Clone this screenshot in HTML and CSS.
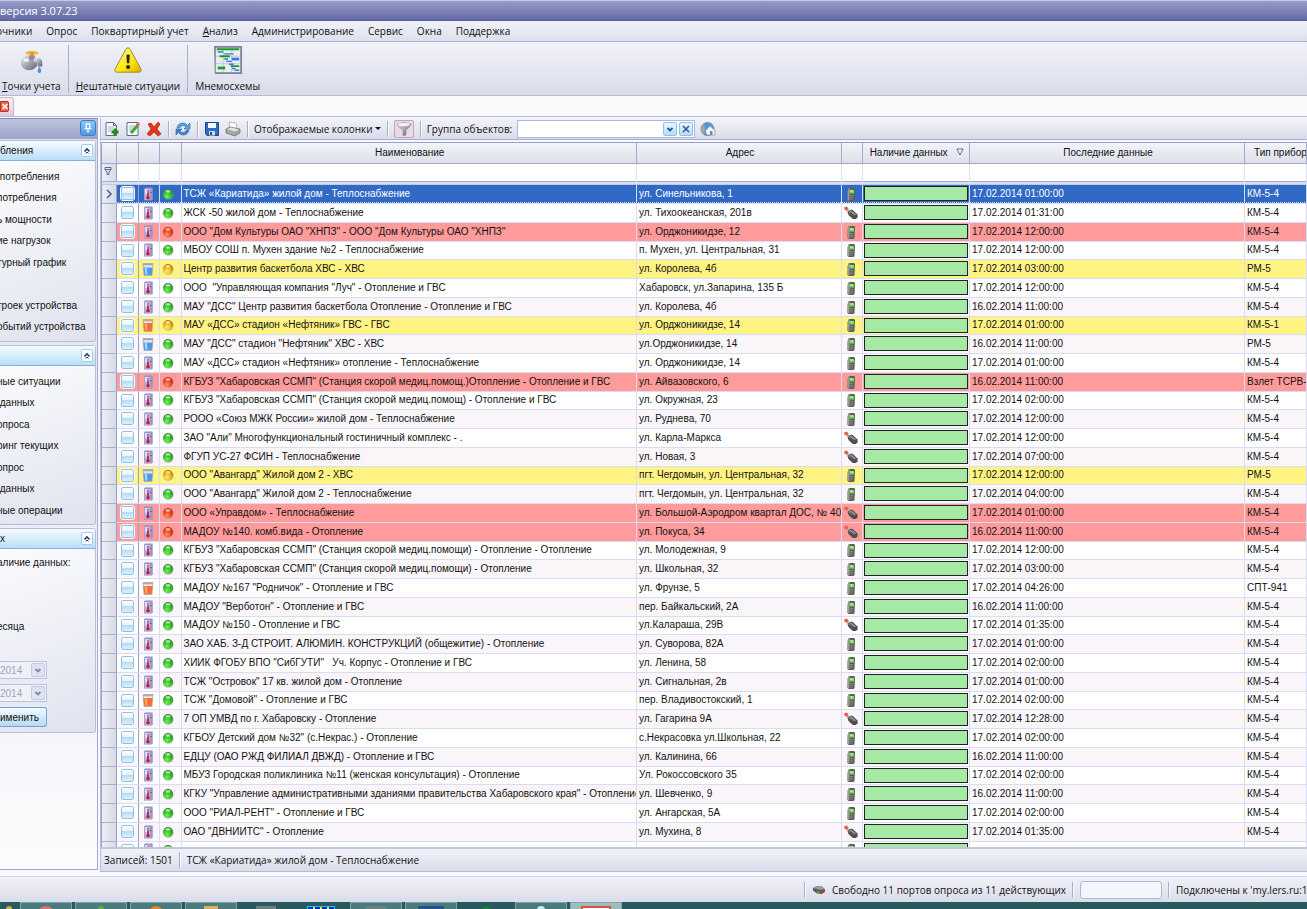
FILE: index.html
```html
<!DOCTYPE html>
<html lang="ru">
<head>
<meta charset="utf-8">
<title>версия 3.07.23</title>
<link rel="stylesheet" href="styles.css">
</head>
<body>
<svg class="symbols" aria-hidden="true">
  <defs>
    <radialGradient id="g-green" cx="0.4" cy="0.75" r="0.7"><stop offset="0" stop-color="#7dee5a"/><stop offset="0.5" stop-color="#35c92b"/><stop offset="1" stop-color="#2b8a22"/></radialGradient>
    <radialGradient id="g-red" cx="0.4" cy="0.75" r="0.7"><stop offset="0" stop-color="#ff9a5a"/><stop offset="0.5" stop-color="#f44a23"/><stop offset="1" stop-color="#b82a12"/></radialGradient>
    <radialGradient id="g-yellow" cx="0.4" cy="0.75" r="0.7"><stop offset="0" stop-color="#fff06a"/><stop offset="0.5" stop-color="#f4bd1b"/><stop offset="1" stop-color="#b97c0a"/></radialGradient>
    <linearGradient id="g-warn" x1="0" y1="0" x2="1" y2="1"><stop offset="0" stop-color="#fffbb0"/><stop offset="0.6" stop-color="#fde800"/><stop offset="1" stop-color="#d9a800"/></linearGradient>
    <linearGradient id="g-metal" x1="0" y1="0" x2="1" y2="1"><stop offset="0" stop-color="#f2f2f8"/><stop offset="0.5" stop-color="#a5a5b4"/><stop offset="1" stop-color="#5d5d70"/></linearGradient>
  </defs>
  <symbol id="green" viewBox="0 0 12 12"><circle cx="6.4" cy="6.6" r="5.2" fill="#999" opacity="0.6"/><circle cx="6" cy="6" r="5" fill="url(#g-green)"/><ellipse cx="6" cy="3.4" rx="2.600" ry="1.300" fill="#fff" opacity="0.6"/></symbol>
  <symbol id="red" viewBox="0 0 12 12"><circle cx="6.4" cy="6.6" r="5.2" fill="#999" opacity="0.6"/><circle cx="6" cy="6" r="5" fill="url(#g-red)"/><ellipse cx="6" cy="3.4" rx="2.600" ry="1.300" fill="#fff" opacity="0.6"/></symbol>
  <symbol id="yellow" viewBox="0 0 12 12"><circle cx="6.4" cy="6.6" r="5.2" fill="#999" opacity="0.6"/><circle cx="6" cy="6" r="5" fill="url(#g-yellow)"/><ellipse cx="6" cy="3.4" rx="2.600" ry="1.300" fill="#fff" opacity="0.6"/></symbol>
  <symbol id="thermo" viewBox="0 0 14 14"><path d="M3 1.500l1-1h7.500v12l-1 1H3z" fill="#8f8bc4"/><path d="M3.500 2l6-.5v11.500h-6z" fill="#b9b5e2"/><path d="M4 2h2.500v5H4z" fill="#dcdaf4"/><path d="M9.500 1.500h2v11.500h-2z" fill="#9a96cc"/><path d="M7 3v7" stroke="#c8505c" stroke-width="1.300"/><path d="M7 6v5" stroke="#c81e28" stroke-width="1.500"/><circle cx="7" cy="10.800" r="1.800" fill="#cc1c28"/><path d="M9 5.500h1.500" stroke="#5c5a94"/></symbol>
  <symbol id="cold" viewBox="0 0 14 14"><path d="M2 1.500h10l-1 12h-8z" fill="#e4e9f0" stroke="#9aa5b5" stroke-width="0.800"/><path d="M2.600 5.500h8.800L10.800 13H3.200z" fill="#4f9ae6"/><path d="M3.600 6h2.400l.4 6.500h-2z" fill="#a8d4fa"/><path d="M2 1.500h10l-.2 1.800H2.200z" fill="#a2a8b2"/></symbol>
  <symbol id="hot" viewBox="0 0 14 14"><path d="M2 1.500h10l-1 12h-8z" fill="#f0e9e4" stroke="#b0a09a" stroke-width="0.800"/><path d="M2.600 5h8.800L10.800 13H3.200z" fill="#f5702e"/><path d="M3.600 5.500h2.400l.4 6.500h-2z" fill="#fba578"/><path d="M2 1.500h10l-.2 1.800H2.200z" fill="#b8a8a2"/></symbol>
  <symbol id="phone" viewBox="0 0 14 14"><path d="M4.500 1.500L6 1h4l1 1-.5 11-1 1h-5l-1-1 .2-9z" fill="#5c5c58"/><path d="M3.700 4l.8-2.500H6L5.200 13.500h-1l-.7-.7z" fill="#9c9c96"/><path d="M6 3h4v3.600H5.800z" fill="#66e04c"/><path d="M6.500 3.300h2v1.500h-2z" fill="#c5f8b0"/><path d="M5.600 8.500h3.800M5.500 10.200h3.800M5.500 12h3.600" stroke="#8e8e8a" stroke-width="0.800"/></symbol>
  <symbol id="modem" viewBox="0 0 14 14"><path d="M0 1.500L2.500.5 4.500 2 4 4 2.500 5 .5 3.500z" fill="#e8604c"/><path d="M2.500 4.500L5 3.300l1 1-2.500 2z" fill="#b8b8b8"/><path d="M3.500 6l3-2.300h2l4.800 4.500.5 3-2 1.800h-3L4.500 9z" fill="#4e4e4e"/><path d="M4.500 6.300L7 4.300l5.200 4-2.600 1.500z" fill="#8e8e8e"/><path d="M6 6.500l4 3" stroke="#3c3c3c" stroke-width="0.800"/></symbol>
  <symbol id="port" viewBox="0 0 14 10"><path d="M1 3l4-2 5 .5 3 3v2l-3 2.500-5-.5-4-3z" fill="#5c5c5c"/><path d="M1 3l4-2 5 .5 2.500 2.500-4 1z" fill="#9a9a9a"/><path d="M5 6.500h2.500v1H5z" fill="#58d048"/><path d="M9 5.500l3.500 0v2L9.500 8z" fill="#c03a28"/></symbol>
  <symbol id="up" viewBox="0 0 10 10"><path d="M2.500 5.500L5 3l2.500 2.500" fill="none" stroke="#1c3f80" stroke-width="1.600"/><path d="M3.500 7.500L5 6l1.500 1.500" fill="none" stroke="#1c3f80"/></symbol>
  <symbol id="down" viewBox="0 0 10 10"><path d="M2.500 4L5 6.500 7.500 4" fill="none" stroke="currentColor" stroke-width="1.800"/></symbol>
</svg>

<header class="title-bar">версия 3.07.23</header>

<nav class="menu">
  <a href="#">очники</a>
  <a href="#">Опрос</a>
  <a href="#">Поквартирный учет</a>
  <a href="#"><u>А</u>нализ</a>
  <a href="#">Администрирование</a>
  <a href="#">Сервис</a>
  <a href="#">Окна</a>
  <a href="#">Поддержка</a>
</nav>

<div class="toolbar">
  <button class="tool">
    <svg viewBox="0 0 32 32"><ellipse cx="14" cy="19" rx="9" ry="8" fill="url(#g-metal)"/><path d="M14 11h6v5h-6z" fill="#8d8da0"/><path d="M19 14l6 0q3 1 3 5v4h-5v-4l-4-1z" fill="url(#g-metal)"/><path d="M10 8q6-3 14 0l-1 2q-6-1-12 0z" fill="#f2b52e"/><path d="M15 8h4v4h-4z" fill="#d9981c"/><ellipse cx="11" cy="16" rx="3" ry="2" fill="#fff" opacity="0.8"/><path d="M25 23q4 6 0 7-4-1 0-7" fill="#4a94e0"/></svg>
    <span><u>Т</u>очки учета</span>
  </button>
  <button class="tool">
    <svg viewBox="0 0 32 32"><path d="M16 3q1.500 0 2.500 2l11 20q1.500 4-2 4h-23q-3.500 0-2-4l11-20q1-2 2.500-2z" fill="url(#g-warn)" stroke="#9a8430"/><path d="M14.300 10.500h3.600l-.6 9h-2.400z" fill="#222"/><circle cx="16.100" cy="23.500" r="2.200" fill="#222"/></svg>
    <span><u>Н</u>ештатные ситуации</span>
  </button>
  <button class="tool">
    <svg viewBox="0 0 32 32"><path d="M1 1h30v30H2z" fill="#7d859c"/><path d="M3 3h26v26H3z" fill="#e9eef4"/><path d="M3 12h26M3 20h26M11 3v26M20 3v26" stroke="#c0c8d4"/><path d="M4 4.500h24M7 12h11M19 22.500h9" stroke="#1a9a22" stroke-width="2"/><path d="M5 24.500h8" stroke="#1a9a22" stroke-width="3"/><path d="M5 7.500h6M12 9.500h10M12 15h4M14 17.500h6M17 20.500h5M20 25h4M23 27h5" stroke="#2f7fe0" stroke-width="1.500"/><path d="M20 15h8" stroke="#2f7fe0" stroke-width="3"/></svg>
    <span>Мнемосхемы</span>
  </button>
</div>

<div class="tabs">
  <div class="tab"><button class="tab-close" aria-label="Закрыть"><svg viewBox="0 0 10 10"><path d="M2 2l6 6M8 2l-6 6" stroke="#fff" stroke-width="2"/></svg></button></div>
</div>

<main class="content">
  <aside class="sidebar">
    <div class="sidebar-head">
      <button class="pin" aria-label="Закрепить"><svg viewBox="0 0 12 12"><path d="M4 2.500h4M4.500 3v3.500M7.500 3v3.500M3 6.500h6M6 7v3" stroke="#fff" fill="none" stroke-width="1.200"/></svg></button>
    </div>

    <section class="group">
      <h2>бления <button aria-label="Свернуть"><svg><use href="#up"/></svg></button></h2>
      <ul>
        <li><a href="#">&nbsp;потребления</a></li>
        <li><a href="#">потребления</a></li>
        <li><a href="#">ь мощности</a></li>
        <li><a href="#">ие нагрузок</a></li>
        <li><a href="#">турный график</a></li>
        <li></li>
        <li><a href="#">троек устройства</a></li>
        <li><a href="#">обытий устройства</a></li>
      </ul>
    </section>

    <section class="group">
      <h2>&nbsp;<button aria-label="Свернуть"><svg><use href="#up"/></svg></button></h2>
      <ul>
        <li><a href="#">ные ситуации</a></li>
        <li><a href="#">&nbsp;данных</a></li>
        <li><a href="#">опроса</a></li>
        <li><a href="#">ринг текущих</a></li>
        <li><a href="#">опрос</a></li>
        <li><a href="#">&nbsp;данных</a></li>
        <li><a href="#">ные операции</a></li>
      </ul>
    </section>

    <section class="group">
      <h2>х <button aria-label="Свернуть"><svg><use href="#up"/></svg></button></h2>
      <form class="period">
        <p>аличие данных:</p>
        <p class="month">есяца</p>
        <div class="date"><input type="text" value="2014" aria-label="Начало периода" disabled><button type="button" aria-label="Выбрать дату" disabled><svg><use href="#down"/></svg></button></div>
        <div class="date"><input type="text" value="2014" aria-label="Конец периода" disabled><button type="button" aria-label="Выбрать дату" disabled><svg><use href="#down"/></svg></button></div>
        <button type="button" class="apply">именить</button>
      </form>
    </section>
  </aside>

  <div class="panel">
    <div class="grid-tools">
      <button aria-label="Добавить"><svg viewBox="0 0 16 16"><path d="M2 1.500h7.500l3 3v10H2z" fill="#f7f9fc" stroke="#5d6f86"/><path d="M9.500 1.500v3h3" fill="none" stroke="#5d6f86"/><path d="M4 6h6M4 8h5M4 10h3" stroke="#a9b7c8"/><path d="M11 7.500v7M7.500 11h7" stroke="#238a1c" stroke-width="3"/></svg></button>
      <button aria-label="Изменить"><svg viewBox="0 0 16 16"><path d="M2 1.500h11v13H2z" fill="#f7f9fc" stroke="#5d6f86"/><path d="M4 5h6M4 7h5M4 9h3" stroke="#a9b7c8"/><path d="M6 12l7-8" stroke="#39a935" stroke-width="3"/><path d="M12 4.500l2-2.500" stroke="#e06a5a" stroke-width="3"/></svg></button>
      <button aria-label="Удалить"><svg viewBox="0 0 16 16"><path d="M2 3l3-1 3 4 4-5 2 2-3 5 4 5-3 2-4-4-4 4-3-2 4-5z" fill="#e8361c" stroke="#b31f0c" stroke-width="0.700"/></svg></button>
      <i class="sep"></i>
      <button aria-label="Обновить"><svg viewBox="0 0 16 16"><path d="M2 7q1-5 6-5 3 0 4.500 2.500L15 2v6H9l2-2q-1-1.500-3-1.500-2.500 0-3.500 2.500z" fill="#5aa2e4" stroke="#2c66ac" stroke-width="0.600"/><path d="M14 9q-1 5-6 5-3 0-4.500-2.500L1 14V8h6l-2 2q1 1.500 3 1.500 2.500 0 3.500-2.500z" fill="#3c84d0" stroke="#2c66ac" stroke-width="0.600"/></svg></button>
      <i class="sep"></i>
      <button aria-label="Сохранить"><svg viewBox="0 0 16 16"><path d="M1.500 1.500h13v13H3l-1.500-2z" fill="#2f6cc4" stroke="#1d4688"/><path d="M4 2h8v5H4z" fill="#f4f8fd"/><path d="M5 10h6v4.500H5z" fill="#c9d6e8"/><path d="M6 11h2v3H6z" fill="#29508e"/></svg></button>
      <button aria-label="Печать"><svg viewBox="0 0 16 16"><path d="M4 1l7 1 1 6H5z" fill="#fff" stroke="#9a9a9a" stroke-width="0.700"/><path d="M1 8l4-2 10 2v4l-5 3-9-3z" fill="#a8a8a8" stroke="#6c6c6c" stroke-width="0.700"/><path d="M2 8l4-1.500 8 2-4 2z" fill="#e3e3e3"/><path d="M10 13l3-1.500" stroke="#58b848"/></svg></button>
      <i class="sep"></i>
      <button class="columns">Отображаемые колонки <span class="arrow"></span></button>
      <i class="sep"></i>
      <button class="filter" aria-label="Фильтр"><svg viewBox="0 0 16 16"><path d="M1 3q7-3 14 0 0 2-5 6v5l-3 1V9Q1 5 1 3z" fill="url(#g-metal)" stroke="#8a8a8a" stroke-width="0.600"/><ellipse cx="8" cy="3.500" rx="6" ry="1.600" fill="#f4f4f4"/></svg></button>
      <i class="sep"></i>
      <label for="objects">Группа объектов:</label>
      <div class="combo">
        <input id="objects" type="text">
        <button aria-label="Открыть список"><svg><use href="#down"/></svg></button>
        <button aria-label="Очистить"><svg viewBox="0 0 10 10"><path d="M2 2l6 6M8 2l-6 6" stroke="#25559c" stroke-width="1.500"/></svg></button>
      </div>
      <button class="home" aria-label="Объекты"><svg viewBox="0 0 16 16"><circle cx="7.500" cy="8" r="6.500" fill="#4c9be0" stroke="#7b8794"/><path d="M1 8a6.500 6.500 0 0 1 3-5l1 5-1 5q-3-1-3-5z" fill="#9aa6b2"/><path d="M5.500 9.500L10 5l5 4.500V14H6.500z" fill="#f6f6f6" stroke="#8b8b8b" stroke-width="0.700"/><path d="M10 10h2.500v4H10z" fill="#4f92d8"/></svg></button>
    </div>

    <div class="grid-wrap">
      <table class="grid">
        <colgroup>
          <col class="c-mark"><col class="c-check"><col class="c-icon"><col class="c-state"><col class="c-name"><col class="c-addr"><col class="c-link"><col class="c-avail"><col class="c-last"><col class="c-type">
        </colgroup>
        <thead>
          <tr class="heads">
            <th></th><th></th><th></th><th></th>
            <th>Наименование</th><th>Адрес</th><th></th>
            <th>Наличие данных <svg class="sort" viewBox="0 0 8 8"><path d="M1 1h6L4 7z" fill="#fff" stroke="#5a66a8"/></svg></th>
            <th>Последние данные</th><th class="cut">Тип прибора</th>
          </tr>
          <tr class="filters">
            <td class="mark"><svg class="sort" viewBox="0 0 8 8"><path d="M1 .5h6v2L5 5v2.500H3V5L1 2.500zM1 2.500h6" fill="none" stroke="#5a66a8"/></svg></td>
            <td></td><td></td><td></td><td></td><td></td><td></td><td></td><td></td><td></td>
          </tr>
          <tr class="divider"><td colspan="10"></td></tr>
        </thead>
        <tbody id="rows"></tbody>
      </table>
    </div>

    <div class="grid-status">
      <span>Записей: 1501</span>
      <i class="sep"></i>
      <span>ТСЖ «Кариатида» жилой дом - Теплоснабжение</span>
    </div>
  </div>
</main>

<footer class="status">
  <i class="sep"></i>
  <svg class="port"><use href="#port"/></svg>
  <span>Свободно 11 портов опроса из 11 действующих</span>
  <i class="sep"></i>
  <div class="progress"></div>
  <i class="sep"></i>
  <span class="server">Подключены к 'my.lers.ru:1</span>
</footer>

<div class="taskbar">
  <i class="task bare yellow"></i>
  <i class="task red"></i>
  <i class="task green"></i>
  <i class="task orange"></i>
  <i class="task sand"></i>
  <i class="task bare gray"></i>
  <i class="task bare blue"></i>
  <i class="task gray"></i>
  <i class="task navy"></i>
  <i class="task bare leaf"></i>
  <i class="task cyan"></i>
  <i class="task active frame"></i>
</div>

<script src="script.js"></script>
</body>
</html>
```
FILE: styles.css
```css
* {
  box-sizing: border-box;
}

body {
  margin: 0;
  height: 100vh;
  display: flex;
  flex-direction: column;
  overflow: hidden;
  background: #f8f8fc;
  color: #111;
  font-family: "Open Sans", "Noto Sans", sans-serif;
  font-size: 10px;
}

button {
  font: inherit;
  color: inherit;
  border: none;
  background: none;
  padding: 0;
}

a {
  color: inherit;
  text-decoration: none;
}

.symbols {
  position: absolute;
  width: 0;
  height: 0;
}

.sep {
  flex: none;
  width: 2px;
  height: 16px;
  border-left: 1px solid #a3abd0;
  border-right: 1px solid #fff;
}

.title-bar {
  flex: none;
  height: 21px;
  line-height: 19px;
  color: #fff;
  font-size: 11px;
  border-top: 1px solid #c3c8de;
  border-bottom: 1px solid #55609a;
  background: linear-gradient(#969dc8, #6269a6);
}

.menu {
  flex: none;
  height: 21px;
  margin-left: -4px;
  display: flex;
  align-items: center;
  gap: 14px;
  background: linear-gradient(#f1f2f8, #dddfec);
  border-bottom: 1px solid #a9afcf;
}

.toolbar {
  flex: none;
  height: 54px;
  display: flex;
  padding: 3px 0 2px;
  background: linear-gradient(#f1f2f8, #dadcea);
  border-bottom: 1px solid #b5bad6;
}

.tool {
  display: flex;
  flex-direction: column;
  align-items: center;
  justify-content: space-between;
  padding: 0 7px;
  border-right: 1px solid #a9afd0;
}

.tool:first-child {
  padding-left: 2px;
}

.tool:last-child {
  border: none;
}

.tool svg {
  width: 30px;
  height: 30px;
}

.tool span {
  line-height: 14px;
}

.tabs {
  flex: none;
  height: 21px;
  display: flex;
  background: #f9f9fc;
  border-bottom: 1px solid #b5bad6;
}

.tab {
  width: 14px;
  margin-top: 1px;
  padding-top: 3px;
  border: 1px solid #c9b2cb;
  border-left: none;
  border-bottom: none;
  border-radius: 0 4px 0 0;
  background: linear-gradient(#fbf2f8, #e3c6dc);
}

.tab-close {
  display: block;
  width: 9px;
  height: 11px;
  border: 1px solid #b8321e;
  border-radius: 0 2px 2px 0;
  background: #e9694f;
}

.tab-close svg {
  display: block;
  width: 8px;
  height: 9px;
}

.content {
  flex: 1;
  min-height: 0;
  display: flex;
  padding: 1px 0 4px;
}

/* left panel */

.sidebar {
  flex: none;
  width: 98px;
  border-top: 1px solid #8089b8;
  border-right: 1px solid #a3aad0;
  border-bottom: 1px solid #a3aad0;
  background: linear-gradient(#dcdfec, #fbfbfd);
  font-family: "Liberation Sans", Arial, sans-serif;
  font-size: 10px;
  margin-bottom: 2px;
}

.sidebar-head {
  height: 20px;
  padding: 1px;
  display: flex;
  justify-content: flex-end;
  background: linear-gradient(#bfc4dc, #9ba3c8);
}

.pin {
  width: 16px;
  height: 16px;
  border: 1px solid #3c7fc0;
  border-radius: 3px;
  background: linear-gradient(#8cc4f4, #4f9ae0);
}

.pin svg {
  display: block;
  width: 14px;
  height: 14px;
}

.group {
  margin: 1px 1px 3px 0;
  border: 1px solid #b7bddb;
  border-left: none;
  border-radius: 0 3px 3px 0;
  background: linear-gradient(160deg, #fdfdfe, #e0e3ef);
}

.group h2 {
  height: 20px;
  margin: 0;
  padding-right: 2px;
  display: flex;
  align-items: center;
  justify-content: space-between;
  font-size: 10px;
  font-weight: normal;
  background: linear-gradient(#f6fcff, #b9def7);
  border-bottom: 1px solid #7fb2dd;
}

.group h2 button {
  width: 12px;
  height: 13px;
  border: 1px solid #a3cdea;
  border-radius: 2px;
  background: #fff;
}

.group h2 svg {
  display: block;
  width: 10px;
  height: 10px;
}

.group ul {
  list-style: none;
  margin: 0 0 0 -3px;
  padding: 5px 0 3px;
}

.group li {
  height: 21px;
  line-height: 21px;
  white-space: nowrap;
}

.group li:nth-child(even) {
  height: 22px;
}

.period {
  padding: 6px 0 5px;
}

.period p {
  margin: 0 0 48px -3px;
  line-height: 16px;
}

.period .month {
  margin-bottom: 26px;
}

.date {
  width: 47px;
  height: 18px;
  margin-bottom: 5px;
  display: flex;
  align-items: center;
  border: 1px solid #bcc2dd;
  border-left: none;
  background: #f0f1f7;
}

.date input {
  width: 31px;
  padding: 0;
  border: none;
  background: none;
  color: #9aa2c4;
  font: inherit;
}

.date button {
  width: 14px;
  height: 14px;
  color: #7d87b5;
  border: 1px solid #c6cbe2;
  border-radius: 2px;
  background: #dfe2ef;
}

.date svg,
.combo svg {
  display: block;
  width: 10px;
  height: 10px;
  margin: auto;
}

.apply {
  display: block;
  width: 47px;
  height: 20px;
  text-align: left;
  border: 1px solid #6ba4d2;
  border-left: none;
  border-radius: 0 3px 3px 0;
  background: linear-gradient(#f4fbff, #b5daf5);
}

/* grid */

.panel {
  flex: 1;
  min-width: 0;
  display: flex;
  flex-direction: column;
  margin-left: 2px;
  border-left: 1px solid #b7bddb;
}

.grid-tools {
  flex: none;
  height: 22px;
  padding-left: 3px;
  display: flex;
  align-items: center;
  gap: 5px;
  background: linear-gradient(#f2f3f9, #dadcea);
  border-bottom: 1px solid #a9afd0;
}

.grid-tools .sep {
  margin-left: 1px;
}

.grid-tools > button > svg {
  display: block;
  width: 16px;
  height: 16px;
}

.columns {
  display: flex;
  align-items: center;
  gap: 2px;
}

.arrow {
  border: 3px solid transparent;
  border-top-color: #111;
  border-bottom: none;
}

.grid-tools .filter {
  width: 20px;
  height: 18px;
  padding-left: 1px;
  border: 1px solid #c3a3c0;
  border-radius: 2px;
  background: #ecd9e8;
}

.combo {
  width: 178px;
  height: 18px;
  display: flex;
  align-items: center;
  gap: 2px;
  padding-right: 1px;
  border: 1px solid #b0b7d8;
  background: #fff;
}

.combo input {
  flex: 1;
  min-width: 0;
  height: 14px;
  padding: 0 2px;
  border: none;
  font: inherit;
}

.combo button {
  width: 14px;
  height: 14px;
  color: #25559c;
  border: 1px solid #8fc2e8;
  border-radius: 2px;
  background: linear-gradient(#eaf6fe, #b9dcf6);
}

.grid-wrap {
  flex: 1;
  min-height: 0;
  margin-top: 2px;
  overflow: hidden;
  border-top: 1px solid #98a0c8;
  border-left: 1px solid #98a0c8;
  background: #fff;
}

.grid {
  width: 100%;
  table-layout: fixed;
  border-collapse: collapse;
  font-family: "Liberation Sans", Arial, sans-serif;
  font-size: 10px;
  line-height: 14px;
}

.c-mark { width: 14px; }
.c-check { width: 22px; }
.c-icon { width: 21px; }
.c-state { width: 22px; }
.c-addr { width: 205px; }
.c-link { width: 21px; }
.c-avail { width: 107px; }
.c-last { width: 275px; }
.c-type { width: 62px; }

.grid th,
.grid td {
  padding: 0 0 0 2px;
  overflow: hidden;
  white-space: pre;
  font-weight: normal;
  text-align: left;
}

.heads {
  height: 20px;
}

.grid .heads th {
  text-align: center;
  border-right: 1px solid #a3aad0;
  border-bottom: 1px solid #a3aad0;
  background: linear-gradient(#f3f4f9, #dcdfeb);
}

.grid .heads .cut {
  text-align: left;
  padding-left: 9px;
}

.sort {
  width: 8px;
  height: 8px;
  margin-left: 6px;
}

.filters {
  height: 18px;
}

.grid .filters td {
  border-right: 1px solid #dfe1f6;
}

.grid .filters .mark .sort {
  margin: 0;
}

.divider {
  height: 3px;
}

.grid .divider td {
  height: 3px;
  border-top: 1px solid #a3aad0;
  border-bottom: 1px solid #b7bddb;
  background: #dcdfec;
  line-height: 1px;
}

#rows tr {
  height: 19px;
}

#rows tr:nth-child(4n) {
  height: 18px;
}

#rows td {
  border-right: 1px solid #dadcf6;
  border-bottom: 1px solid #dadcf6;
}

#rows tr:nth-child(odd) {
  background: #f9f5f9;
}

#rows tr.bad {
  background: #ff9b9b;
}

#rows tr.warn {
  background: #fff483;
}

#rows tr.selected {
  color: #fff;
  background: #316ac5;
  outline: 1px dotted #c9d8f2;
  outline-offset: -1px;
}

.grid td.mark,
#rows td.mark {
  border-right: 1px solid #98a0c8;
  border-bottom: 1px solid #a9afd0;
  background: linear-gradient(90deg, #eef0f6, #d6d9e6);
}

#rows .check {
  padding: 0 4px;
  border-right-color: #98a0c8;
}

#rows .pic {
  padding: 0 2px;
}

#rows svg {
  display: block;
  width: 14px;
  height: 14px;
}

#rows .state svg {
  width: 12px;
  height: 12px;
}

#rows .mark svg {
  width: 10px;
  height: 10px;
}

.check input {
  appearance: none;
  display: block;
  width: 13px;
  height: 13px;
  margin: 0;
  border: 1px solid #8fbfe4;
  border-radius: 2px;
  outline: 1px solid #fff;
  background: linear-gradient(#fff, #e4f3fd 45%, #b9dcf6 50%, #dff1fc);
}

#rows .avail {
  padding: 1px;
}

.bar {
  height: 15px;
  border: 1px solid #222;
  background: #a6e9a4;
}

.grid-status {
  flex: none;
  height: 25px;
  padding-left: 3px;
  display: flex;
  align-items: center;
  gap: 6px;
  border-top: 2px solid #c3c8e0;
  border-bottom: 1px solid #b5bad6;
  background: linear-gradient(#f1f2f8, #dadcea);
}

/* bottom */

.status {
  flex: none;
  height: 26px;
  display: flex;
  align-items: center;
  justify-content: flex-end;
  gap: 6px;
  border-top: 1px solid #d2d5e6;
  background: linear-gradient(#f1f2f8, #dadcea);
}

.port {
  width: 14px;
  height: 10px;
}

.progress {
  width: 82px;
  height: 18px;
  border: 1px solid #b0b7d8;
  border-radius: 3px;
  background: #f5f6fb;
}

.server {
  width: 131px;
  overflow: hidden;
  white-space: nowrap;
}

.taskbar {
  flex: none;
  height: 7px;
  display: flex;
  gap: 3px;
  overflow: hidden;
  background: #27595f;
}

.task {
  width: 52px;
  padding-top: 3px;
  border: 1px solid #7fa5a6;
  border-bottom: none;
  background: #4a7b7d;
}

.task::before {
  content: "";
  display: block;
  width: 26px;
  height: 8px;
  margin: 0 auto;
  border-radius: 8px 8px 0 0;
  background: #9a9a9a;
}

.task.bare {
  border-color: transparent;
  background: none;
}

.task.active {
  background: #9dbcbc;
}

.task.yellow { width: 17px; }
.task.yellow::before { width: 6px; background: #c9b13a; }
.task.red::before { width: 16px; background: #e07070; }
.task.green::before { width: 6px; background: #5fae3d; }
.task.orange::before { width: 14px; background: #e08a1f; }
.task.sand::before { width: 14px; border-radius: 0; background: #d9b45a; }
.task.gray::before { width: 20px; border-radius: 0; background: #6e7f80; }
.task.blue::before { border: 1px solid #16c8e8; border-radius: 0; background: repeating-linear-gradient(90deg, #0a2bd0 0 5px, #e8e040 5px 7px); }
.task.navy::before { border-radius: 0; background: #24508e; }
.task.leaf::before { width: 12px; background: #1e7a3e; }
.task.cyan::before { width: 8px; background: #bfeef2; }
.task.frame::before { border: 2px solid #e0503c; border-radius: 0; background: #fff; }
```
FILE: script.js
```js
// name, address, link, last data, device, icon, state
const data = [
  ['ТСЖ «Кариатида» жилой дом - Теплоснабжение', 'ул. Синельникова, 1', 'phone', '17.02.2014 01:00:00', 'КМ-5-4'],
  ['ЖСК -50 жилой дом - Теплоснабжение', 'ул. Тихоокеанская, 201в', 'modem', '17.02.2014 01:31:00', 'КМ-5-4'],
  ['ООО "Дом Культуры ОАО "ХНПЗ" - ООО "Дом Культуры ОАО "ХНПЗ"', 'ул. Орджоникидзе, 12', 'phone', '17.02.2014 12:00:00', 'КМ-5-4', 'thermo', 'red'],
  ['МБОУ СОШ п. Мухен здание №2 - Теплоснабжение', 'п. Мухен, ул. Центральная, 31', 'phone', '17.02.2014 12:00:00', 'КМ-5-4'],
  ['Центр развития баскетбола ХВС - ХВС', 'ул. Королева, 4б', 'phone', '17.02.2014 03:00:00', 'РМ-5', 'cold', 'yellow'],
  ['ООО  "Управляющая компания "Луч" - Отопление и ГВС', 'Хабаровск, ул.Запарина, 135 Б', 'phone', '17.02.2014 12:00:00', 'КМ-5-4'],
  ['МАУ "ДСС" Центр развития баскетбола Отопление - Отопление и ГВС', 'ул. Королева, 4б', 'phone', '16.02.2014 11:00:00', 'КМ-5-4'],
  ['МАУ «ДСС» стадион «Нефтяник» ГВС - ГВС', 'ул. Орджоникидзе, 14', 'phone', '17.02.2014 01:00:00', 'КМ-5-1', 'hot', 'yellow'],
  ['МАУ "ДСС" стадион "Нефтяник" ХВС - ХВС', 'ул.Орджоникидзе, 14', 'phone', '16.02.2014 11:00:00', 'РМ-5', 'cold'],
  ['МАУ «ДСС» стадион «Нефтяник» отопление - Теплоснабжение', 'ул. Орджоникидзе, 14', 'phone', '17.02.2014 01:00:00', 'КМ-5-4'],
  ['КГБУЗ "Хабаровская ССМП" (Станция скорой медиц.помощ.)Отопление - Отопление и ГВС', 'ул. Айвазовского, 6', 'phone', '16.02.2014 11:00:00', 'Взлет ТСРВ-0', 'thermo', 'red'],
  ['КГБУЗ "Хабаровская ССМП" (Станция скорой медиц.помощ) - Отопление и ГВС', 'ул. Окружная, 23', 'phone', '17.02.2014 02:00:00', 'КМ-5-4'],
  ['РООО «Союз МЖК России» жилой дом - Теплоснабжение', 'ул. Руднева, 70', 'phone', '17.02.2014 12:00:00', 'КМ-5-4'],
  ['ЗАО "Али" Многофункциональный гостиничный комплекс - .', 'ул. Карла-Маркса', 'modem', '17.02.2014 12:00:00', 'КМ-5-4'],
  ['ФГУП УС-27 ФСИН - Теплоснабжение', 'ул. Новая, 3', 'modem', '17.02.2014 07:00:00', 'КМ-5-4'],
  ['ООО "Авангард" Жилой дом 2 - ХВС', 'пгт. Чегдомын, ул. Центральная, 32', 'phone', '17.02.2014 12:00:00', 'РМ-5', 'cold', 'yellow'],
  ['ООО "Авангард" Жилой дом 2 - Теплоснабжение', 'пгт. Чегдомын, ул. Центральная, 32', 'phone', '17.02.2014 04:00:00', 'КМ-5-4'],
  ['ООО «Управдом» - Теплоснабжение', 'ул. Большой-Аэродром квартал ДОС, № 40', 'modem', '17.02.2014 01:00:00', 'КМ-5-4', 'thermo', 'red'],
  ['МАДОУ №140. комб.вида - Отопление', 'ул. Покуса, 34', 'modem', '16.02.2014 11:00:00', 'КМ-5-4', 'thermo', 'red'],
  ['КГБУЗ "Хабаровская ССМП" (Станция скорой медиц.помощи) - Отопление - Отопление', 'ул. Молодежная, 9', 'phone', '17.02.2014 12:00:00', 'КМ-5-4'],
  ['КГБУЗ "Хабаровская ССМП" (Станция скорой медиц.помощи) - Отопление', 'ул. Школьная, 32', 'phone', '17.02.2014 03:00:00', 'КМ-5-4'],
  ['МАДОУ №167 "Родничок" - Отопление и ГВС', 'ул. Фрунзе, 5', 'phone', '17.02.2014 04:26:00', 'СПТ-941', 'hot'],
  ['МАДОУ "Верботон" - Отопление и ГВС', 'пер. Байкальский, 2А', 'phone', '16.02.2014 11:00:00', 'КМ-5-4'],
  ['МАДОУ №150 - Отопление и ГВС', 'ул.Калараша, 29В', 'modem', '17.02.2014 01:35:00', 'КМ-5-4'],
  ['ЗАО ХАБ. З-Д СТРОИТ. АЛЮМИН. КОНСТРУКЦИЙ (общежитие) - Отопление', 'ул. Суворова, 82А', 'phone', '17.02.2014 01:00:00', 'КМ-5-4'],
  ['ХИИК ФГОБУ ВПО "СибГУТИ"   Уч. Корпус - Отопление и ГВС', 'ул. Ленина, 58', 'phone', '17.02.2014 02:00:00', 'КМ-5-4'],
  ['ТСЖ "Островок" 17 кв. жилой дом - Отопление', 'ул. Сигнальная, 2в', 'phone', '17.02.2014 01:00:00', 'КМ-5-4'],
  ['ТСЖ "Домовой" - Отопление и ГВС', 'пер. Владивостокский, 1', 'phone', '17.02.2014 02:00:00', 'КМ-5-4', 'hot'],
  ['7 ОП УМВД по г. Хабаровску - Отопление', 'ул. Гагарина 9А', 'modem', '17.02.2014 12:28:00', 'КМ-5-4'],
  ['КГБОУ Детский дом №32" (с.Некрас.) - Отопление', 'с.Некрасовка ул.Школьная, 22', 'phone', '17.02.2014 02:00:00', 'КМ-5-4'],
  ['ЕДЦУ (ОАО РЖД ФИЛИАЛ ДВЖД) - Отопление и ГВС', 'ул. Калинина, 66', 'phone', '16.02.2014 11:00:00', 'КМ-5-4'],
  ['МБУЗ Городская поликлиника №11 (женская консультация) - Отопление', 'Ул. Рокоссовского 35', 'phone', '17.02.2014 02:00:00', 'КМ-5-4'],
  ['КГКУ "Управление административными зданиями правительства Хабаровского края" - Отопление', 'ул. Шевченко, 9', 'phone', '16.02.2014 11:00:00', 'КМ-5-4'],
  ['ООО "РИАЛ-РЕНТ" - Отопление и ГВС', 'ул. Ангарская, 5А', 'phone', '17.02.2014 02:00:00', 'КМ-5-4'],
  ['ОАО "ДВНИИТС" - Отопление', 'ул. Мухина, 8', 'modem', '17.02.2014 01:35:00', 'КМ-5-4'],
  ['', '', 'phone', '', '']
];

const rowClass = { red: 'bad', yellow: 'warn' };
const icon = name => `<svg><use href="#${name}"/></svg>`;
const arrow = '<svg viewBox="0 0 10 10"><path d="M3 1l4 4-4 4" fill="none" stroke="#4a5a9c" stroke-width="1.500"/></svg>';

document.getElementById('rows').innerHTML = data.map(function(row, i) {
  const [name, address, link, last, device, type = 'thermo', state = 'green'] = row;
  const cls = i === 0 ? 'selected' : rowClass[state] || '';
  return `<tr class="${cls}">
    <td class="mark">${i === 0 ? arrow : ''}</td>
    <td class="check"><input type="checkbox" aria-label="Выбрать"></td>
    <td class="pic">${icon(type)}</td>
    <td class="pic state">${icon(state)}</td>
    <td>${name}</td>
    <td>${address}</td>
    <td class="pic">${icon(link)}</td>
    <td class="avail"><div class="bar"></div></td>
    <td>${last}</td>
    <td>${device}</td>
  </tr>`;
}).join('');
```
